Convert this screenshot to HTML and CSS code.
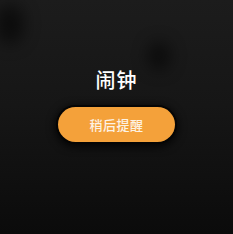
FILE: index.html
```html
<!DOCTYPE html>
<html lang="zh">
<head>
  <meta charset="UTF-8">
  <meta name="viewport" content="width=device-width, initial-scale=1.0">
  <title>闹钟</title>
  <link rel="stylesheet" href="styles.css">
</head>
<body>
  <div class="screen">
    <span class="smudge smudge-left"></span>
    <span class="smudge smudge-right"></span>
    <div class="alarm">
      <h1 class="alarm-title">闹钟</h1>
      <button class="snooze-button">稍后提醒</button>
    </div>
  </div>
</body>
</html>
```

FILE: styles.css
```css
html, body {
  margin: 0;
  padding: 0;
  background: #0c0c0c;
}
body {
  font-family: "Noto Sans CJK SC", "Noto Sans", sans-serif;
}
.screen {
  position: relative;
  width: 233px;
  height: 234px;
  overflow: hidden;
  background: linear-gradient(to bottom, #1c1c1c 0%, #161616 45%, #0b0b0b 100%);
}
.smudge {
  position: absolute;
  border-radius: 50%;
  background: rgba(0, 0, 0, 0.55);
  filter: blur(8px);
}
.smudge-left {
  left: -4px;
  top: 4px;
  width: 28px;
  height: 40px;
}
.smudge-right {
  left: 148px;
  top: 42px;
  width: 22px;
  height: 28px;
}
.alarm {
  position: relative;
  display: flex;
  flex-direction: column;
  align-items: center;
  padding-top: 66px;
}
.alarm-title {
  margin: 0;
  font-size: 20px;
  font-weight: 500;
  line-height: 28px;
  color: #ffffff;
  letter-spacing: 1px;
}
.snooze-button {
  margin-top: 13px;
  width: 117px;
  height: 35px;
  border: none;
  border-radius: 18px;
  background: #f4a13a;
  color: #fdf2e4;
  font-family: inherit;
  font-size: 13px;
  font-weight: 500;
  letter-spacing: 0.5px;
  box-shadow: 0 0 0 2px #050505, 0 2px 8px 3px rgba(0, 0, 0, 0.8);
}
```
